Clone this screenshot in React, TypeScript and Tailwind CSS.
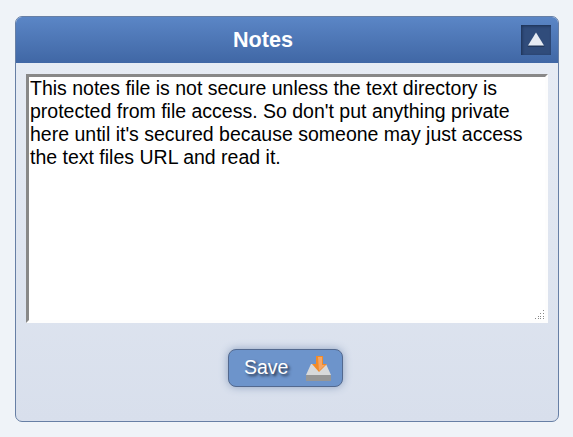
const NOTE =
  "This notes file is not secure unless the text directory is protected from file access. So don't put anything private here until it's secured because someone may just access the text files URL and read it.";

// Dots of the textarea's resize grip, as [x, y]
const GRIP_DOTS = [
  [8, 0],
  [5, 3], [8, 3],
  [3, 6], [5, 6], [8, 6],
  [0, 8], [3, 8], [5, 8], [8, 8],
];

function CollapseButton() {
  return (
    <button
      aria-label="Collapse"
      className="flex h-[30px] w-[30px] items-center justify-center bg-[#304c7b] shadow-[inset_1px_1px_3px_#1b2f52]"
    >
      <svg width="18" height="16" viewBox="0 0 18 16">
        <path d="M9 1.5L17.5 15H0.5Z" fill="#1b2d4d" opacity="0.7" />
        <path d="M9 0.5L17 13.5H1Z" fill="#e6ebf3" />
      </svg>
    </button>
  );
}

function SaveIcon() {
  return (
    <svg width="25" height="25" viewBox="0 0 25 25">
      <path d="M5 8H20L25 19H0Z" fill="#d8d9da" />
      <rect y="19" width="25" height="6" fill="#969696" />
      <path d="M10 0H17V8H21L13 16L6 8H10Z" fill="#f28b28" />
      <path d="M12 1H16V9H19L13 15Z" fill="#f5a666" />
    </svg>
  );
}

export default function App() {
  return (
    <div className="h-[437px] w-[573px] bg-[#eff3f8] pt-4 pl-[15px] font-['Liberation_Sans',Arial,sans-serif]">
      <section className="h-[406px] w-[544px] overflow-hidden rounded-[7px] border border-[#677fa5] bg-linear-to-b from-[#e8edf5] to-[#d8dfec]">
        <header className="flex h-[46px] items-center bg-linear-to-b from-[#5b86c6] to-[#4067a5] pr-[7px]">
          <h1 className="flex-1 pr-[11px] text-center text-[21.6px] leading-[26px] font-bold text-white">Notes</h1>
          <CollapseButton />
        </header>
        <div className="px-2.5 pt-[11px]">
          <div className="relative h-[249px]">
            <textarea
              defaultValue={NOTE}
              spellCheck={false}
              className="block h-[249px] w-[522px] resize-none border-[3px] border-t-[#888] border-r-[#fdfdfd] border-b-[#fdfdfd] border-l-[#888] bg-white px-px text-[19.5px] leading-[23px] text-black outline-none"
            />
            <svg className="absolute right-[3px] bottom-[3px]" width="10" height="10" viewBox="0 0 10 10">
              {GRIP_DOTS.map(([x, y]) => (
                <rect key={`${x}-${y}`} x={x} y={y} width="1" height="1" fill="#888" />
              ))}
            </svg>
          </div>
          <div className="flex justify-center pt-[26px] pr-[3px]">
            <button className="flex h-[38px] w-[115px] items-center justify-between rounded-[8px] border border-[#53698f] bg-[#6d94cb] pr-[11px] pl-[15px] text-[19.5px] text-white shadow-[0_0_8px_#8ea1c0]">
              <span className="pb-px [text-shadow:2px_2px_3px_#222e44]">Save</span>
              <SaveIcon />
            </button>
          </div>
        </div>
      </section>
    </div>
  );
}
